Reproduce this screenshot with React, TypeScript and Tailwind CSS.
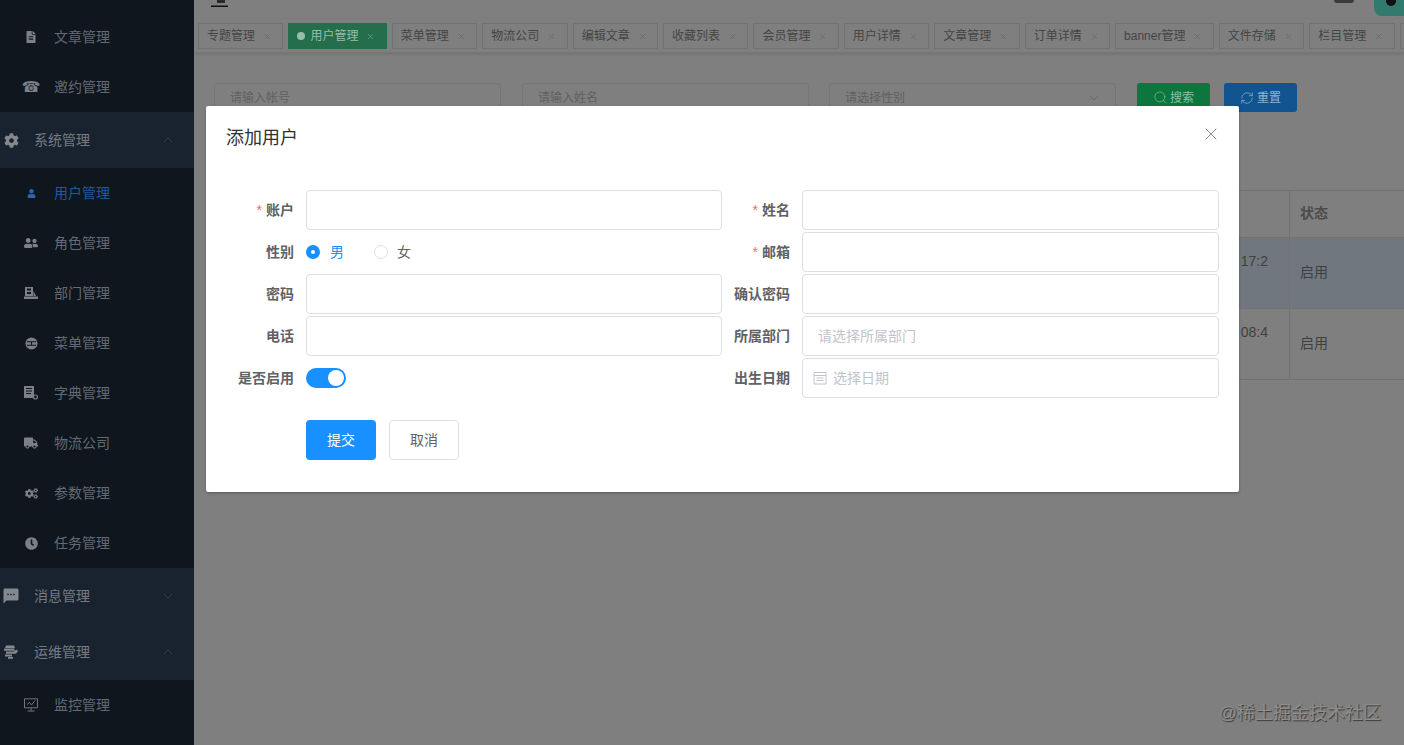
import type { ReactNode } from 'react';
import { ChevronDown, ChevronUp, RefreshCw, Search, X } from 'lucide-react';
import { FaClock, FaCog, FaCogs, FaFileAlt, FaTruck, FaUser, FaUserFriends } from 'react-icons/fa';
import { MdSms } from 'react-icons/md';

const FONT = 'font-["Liberation_Sans","Noto_Sans_CJK_SC",sans-serif]';

const Phone = () => <span className='font-["DejaVu_Sans"] text-[15px] leading-none'>☎</span>;

const Dept = () => (
  <svg viewBox="0 0 14 14" className="h-[14px] w-[14px]" fill="currentColor">
    <path d="M1 1h8v9H1z M3 2.5v2h4v-2z M3 6v2h4V6z" fillRule="evenodd" />
    <path d="M9.5 5l2.5 5H9.5z M0 10.5h14V13H0z" />
  </svg>
);

const MenuRound = () => (
  <svg viewBox="0 0 14 14" className="h-[13px] w-[13px]">
    <circle cx="7" cy="7" r="6.5" fill="currentColor" />
    <path d="M2 5.2h10M2 8.8h10M7 5.2v3.6" stroke="#0f161e" strokeWidth="1.1" />
  </svg>
);

const Dict = () => (
  <svg viewBox="0 0 14 14" className="h-[14px] w-[14px]" fill="currentColor">
    <path fillRule="evenodd" d="M0 0h10v12H0z M2 2v1h6V2z M2 4.5v1h6v-1z M2 7v1h5V7z" />
    <circle cx="11.5" cy="11" r="2" fill="none" stroke="currentColor" strokeWidth="1.2" />
  </svg>
);

const Ops = () => (
  <svg viewBox="0 0 14 14" className="h-[14px] w-[14px]" fill="currentColor">
    <path d="M2 0.5h8l1 2.5H1z M0 3.6h10.5v2.2H0z M2 6.6h9v2.2H2z M1 9.4h7v2.2H1z M4 12h5v1.7H4z" />
    <path d="M9.5 6l4-1.5v2.4l-2 2z" />
  </svg>
);

const Monitor = () => (
  <svg viewBox="0 0 14 14" className="h-[14px] w-[14px]" fill="none" stroke="currentColor" strokeWidth="0.9">
    <path d="M0.5 0.8h13v9h-13z M3 6.5l2.5 -2 2 2.5 3.5 -4.5 M7 9.8v3 M3.5 13h7" />
  </svg>
);

type SideRow = { label: string; icon: ReactNode; group?: 'open' | 'closed'; active?: boolean };

const sideRows: SideRow[] = [
  { label: '文章管理', icon: <FaFileAlt size={12} /> },
  { label: '邀约管理', icon: <Phone /> },
  { label: '系统管理', icon: <FaCog size={15} />, group: 'open' },
  { label: '用户管理', icon: <FaUser size={9} />, active: true },
  { label: '角色管理', icon: <FaUserFriends size={14} /> },
  { label: '部门管理', icon: <Dept /> },
  { label: '菜单管理', icon: <MenuRound /> },
  { label: '字典管理', icon: <Dict /> },
  { label: '物流公司', icon: <FaTruck size={14} /> },
  { label: '参数管理', icon: <FaCogs size={13} /> },
  { label: '任务管理', icon: <FaClock size={13} /> },
  { label: '消息管理', icon: <MdSms size={18} />, group: 'closed' },
  { label: '运维管理', icon: <Ops />, group: 'open' },
  { label: '监控管理', icon: <Monitor /> },
];

const tabs = ['专题管理', '用户管理', '菜单管理', '物流公司', '编辑文章', '收藏列表', '会员管理', '用户详情', '文章管理', '订单详情', 'banner管理', '文件存储', '栏目管理'];

function Sidebar() {
  return (
    <aside className="h-full w-[194px] shrink-0 overflow-hidden bg-[#0f161e] pt-3 text-[14px]">
      {sideRows.map((row) =>
        row.group ? (
          <div key={row.label} className="flex h-14 items-center bg-[#19232f]">
            <span className="flex w-[22px] justify-center text-[#85888d]">{row.icon}</span>
            <span className="ml-3 flex-1 text-[#767b82]">{row.label}</span>
            {row.group === 'open' ? (
              <ChevronUp size={16} strokeWidth={1} className="mr-[18px] text-[#454c55]" />
            ) : (
              <ChevronDown size={16} strokeWidth={1} className="mr-[18px] text-[#454c55]" />
            )}
          </div>
        ) : (
          <div
            key={row.label}
            className={`flex h-[50px] items-center ${row.active ? 'text-[#205a9e]' : 'text-[#646a73]'}`}
          >
            <span className={`ml-[21px] flex w-5 justify-center ${row.active ? 'text-[#2a6aa8]' : 'text-[#7c8087]'}`}>
              {row.icon}
            </span>
            <span className="ml-[13px]">{row.label}</span>
          </div>
        ),
      )}
    </aside>
  );
}

function TopBars() {
  return (
    <>
      <div className="flex h-[19px] items-start justify-between overflow-hidden">
        <svg viewBox="0 0 17 7" className="ml-[17px] h-[7px] w-[17px]">
          <path d="M6 0h8v3H6z" fill="#2a2a2a" />
          <path d="M0 5.5h17v1.5H0z" fill="#111" />
        </svg>
        <div className="flex items-start">
          <div className="h-[3px] w-5 rounded-b-sm bg-[#3a3a3a]" />
          <div className="ml-5 flex h-4 w-[30px] justify-center rounded-bl-lg bg-[#32796e] pl-1">
            <div className="h-1.5 w-2.5 rounded-b-full bg-[#111]" />
          </div>
        </div>
      </div>
      <div className="flex h-[34px] gap-[5px] overflow-hidden whitespace-nowrap border-b border-[#777] pl-1 pt-1 shadow-[0_1px_3px_rgba(0,0,0,0.12)]">
        {tabs.map((tab) => {
          const active = tab === '用户管理';
          return (
            <div
              key={tab}
              className={`flex h-[26px] shrink-0 items-center border px-2 text-xs ${
                active ? 'border-[#256e4c] bg-[#256e4c] text-[#98bdaa]' : 'border-[#727272] text-[#454545]'
              }`}
            >
              {active && <span className="mr-[5px] h-2 w-2 rounded-full bg-[#98bdaa]" />}
              {tab}
              <X size={9} strokeWidth={1.2} className={`ml-[8px] mr-[2.4px] ${active ? 'text-[#98bdaa]' : 'text-[#5c5c5c]'}`} />
            </div>
          );
        })}
        <div className="h-[26px] w-[85px] shrink-0 border border-[#727272]" />
      </div>
    </>
  );
}

function SearchRow() {
  const box = 'flex h-[29px] w-[287px] items-center justify-between rounded-[3px] border border-[#757575] px-[15px] text-xs text-[#616161]';
  return (
    <div className="flex items-start">
      <div className={box}>请输入帐号</div>
      <div className={`${box} ml-[21px]`}>请输入姓名</div>
      <div className={`${box} ml-5`}>
        请选择性别
        <ChevronDown size={16} strokeWidth={1} className="-mr-[2px] text-[#5f5f5f]" />
      </div>
      <button type="button" className="ml-[21px] flex h-[29px] w-[73px] items-center justify-center gap-[2px] rounded-[3px] bg-[#0d763e] text-xs text-[#8fc0a6]">
        <Search size={15} strokeWidth={1} />
        搜索
      </button>
      <button type="button" className="ml-[14px] flex h-[29px] w-[73px] items-center justify-center gap-[3px] rounded-[3px] bg-[#12548f] text-xs text-[#8db3d4]">
        <RefreshCw size={14} strokeWidth={1.2} />
        重置
      </button>
    </div>
  );
}

function UserTable() {
  const rows = [
    { time: '2021-03-12 17:2', rest: '6:31', tint: 'bg-[#70777f]' },
    { time: '2021-03-15 08:4', rest: '2:16', tint: '' },
  ];
  return (
    <div className="mt-[78px] border-t border-[#727272] text-sm">
      <div className="flex h-[47px] border-b border-[#727272]">
        <div className="flex-1 border-r border-[#727272]" />
        <div className="flex w-[114px] items-center pb-[2px] pl-[10px] font-bold text-[#4c4c4c]">状态</div>
      </div>
      {rows.map((row) => (
        <div key={row.time} className={`flex h-[71px] border-b border-[#727272] ${row.tint}`}>
          <div className="flex flex-1 items-center justify-end border-r border-[#727272] pb-[2px] pr-[21px] leading-[22px] text-[#3f3f3f]">
            <div className="w-[120px] whitespace-nowrap">
              <div className="text-right">{row.time}</div>
              <div>{row.rest}</div>
            </div>
          </div>
          <div className="flex w-[114px] items-center pb-[2px] pl-[10px] text-[#3f3f3f]">启用</div>
        </div>
      ))}
    </div>
  );
}

function Field({ label, required, children }: { label: string; required?: boolean; children: ReactNode }) {
  return (
    <div className="flex h-10 items-center">
      <label className="w-20 shrink-0 pr-3 text-right text-sm font-bold text-[#606266]">
        {required && <span className="mr-1 font-normal text-[#f56c6c]">*</span>}
        {label}
      </label>
      {children}
    </div>
  );
}

const inputClass = 'h-10 min-w-0 flex-1 rounded border border-[#dcdfe6] bg-white px-[15px] text-sm outline-none placeholder:text-[#c0c4cc]';

function AddUserDialog() {
  return (
    <div className="absolute left-[206px] top-[106px] w-[1033px] rounded-[2px] bg-white shadow-[0_1px_3px_rgba(0,0,0,0.3)]">
      <div className="flex items-start justify-between px-5 pb-[10px] pt-5">
        <span className="text-lg leading-6 text-[#303133]">添加用户</span>
        <X size={20} strokeWidth={1.2} className="-mr-[2px] -mt-[2px] mb-[-2px] text-[#909399]" />
      </div>
      <form className="px-5 pb-[30px] pt-[30px]">
        <div className="grid grid-cols-[496px_497px] gap-y-[2px]">
          <Field label="账户" required>
            <input className={inputClass} />
          </Field>
          <Field label="姓名" required>
            <input className={inputClass} />
          </Field>
          <Field label="性别">
            <span className="flex h-[14px] w-[14px] items-center justify-center rounded-full bg-[#1890ff]">
              <span className="h-1 w-1 rounded-full bg-white" />
            </span>
            <span className="ml-[10px] text-sm text-[#1890ff]">男</span>
            <span className="ml-[30px] h-[14px] w-[14px] rounded-full border border-[#dcdfe6]" />
            <span className="ml-[9px] text-sm text-[#606266]">女</span>
          </Field>
          <Field label="邮箱" required>
            <input className={inputClass} />
          </Field>
          <Field label="密码">
            <input className={inputClass} />
          </Field>
          <Field label="确认密码">
            <input className={inputClass} />
          </Field>
          <Field label="电话">
            <input className={inputClass} />
          </Field>
          <Field label="所属部门">
            <input className={inputClass} placeholder="请选择所属部门" />
          </Field>
          <Field label="是否启用">
            <span className="flex h-5 w-10 items-center justify-end rounded-full bg-[#1890ff] pr-[2px]">
              <span className="h-4 w-4 rounded-full bg-white" />
            </span>
          </Field>
          <Field label="出生日期">
            <div className="flex h-10 flex-1 items-center rounded border border-[#dcdfe6] pl-[10px]">
              <svg viewBox="0 0 14 14" className="h-[14px] w-[14px] text-[#c0c4cc]" fill="none" stroke="currentColor" strokeWidth="1">
                <path d="M1 1.5h12v11.5H1z M1 4.5h12 M3.5 7h7 M3.5 9.5h7" />
              </svg>
              <input className="ml-[6px] min-w-0 flex-1 text-sm outline-none placeholder:text-[#c0c4cc]" placeholder="选择日期" />
            </div>
          </Field>
        </div>
        <div className="ml-20 mt-[22px] mb-[2px] flex gap-[13px]">
          <button type="button" className="h-10 w-[70px] rounded bg-[#1890ff] text-sm text-white">
            提交
          </button>
          <button type="button" className="h-10 w-[70px] rounded border border-[#dcdfe6] bg-white text-sm text-[#606266]">
            取消
          </button>
        </div>
      </form>
    </div>
  );
}

export default function App() {
  return (
    <div className={`relative flex h-screen overflow-hidden bg-[#7f7f7f] ${FONT}`}>
      <Sidebar />
      <main className="min-w-0 flex-1">
        <TopBars />
        <div className="pl-5 pt-[30px]">
          <SearchRow />
          <UserTable />
        </div>
      </main>
      <AddUserDialog />
      <div className="absolute bottom-[20px] right-[23px] text-[18px] leading-6 text-[#8e8e8e] [text-shadow:1px_1px_1px_rgba(0,0,0,0.55)]">
        @稀土掘金技术社区
      </div>
    </div>
  );
}
